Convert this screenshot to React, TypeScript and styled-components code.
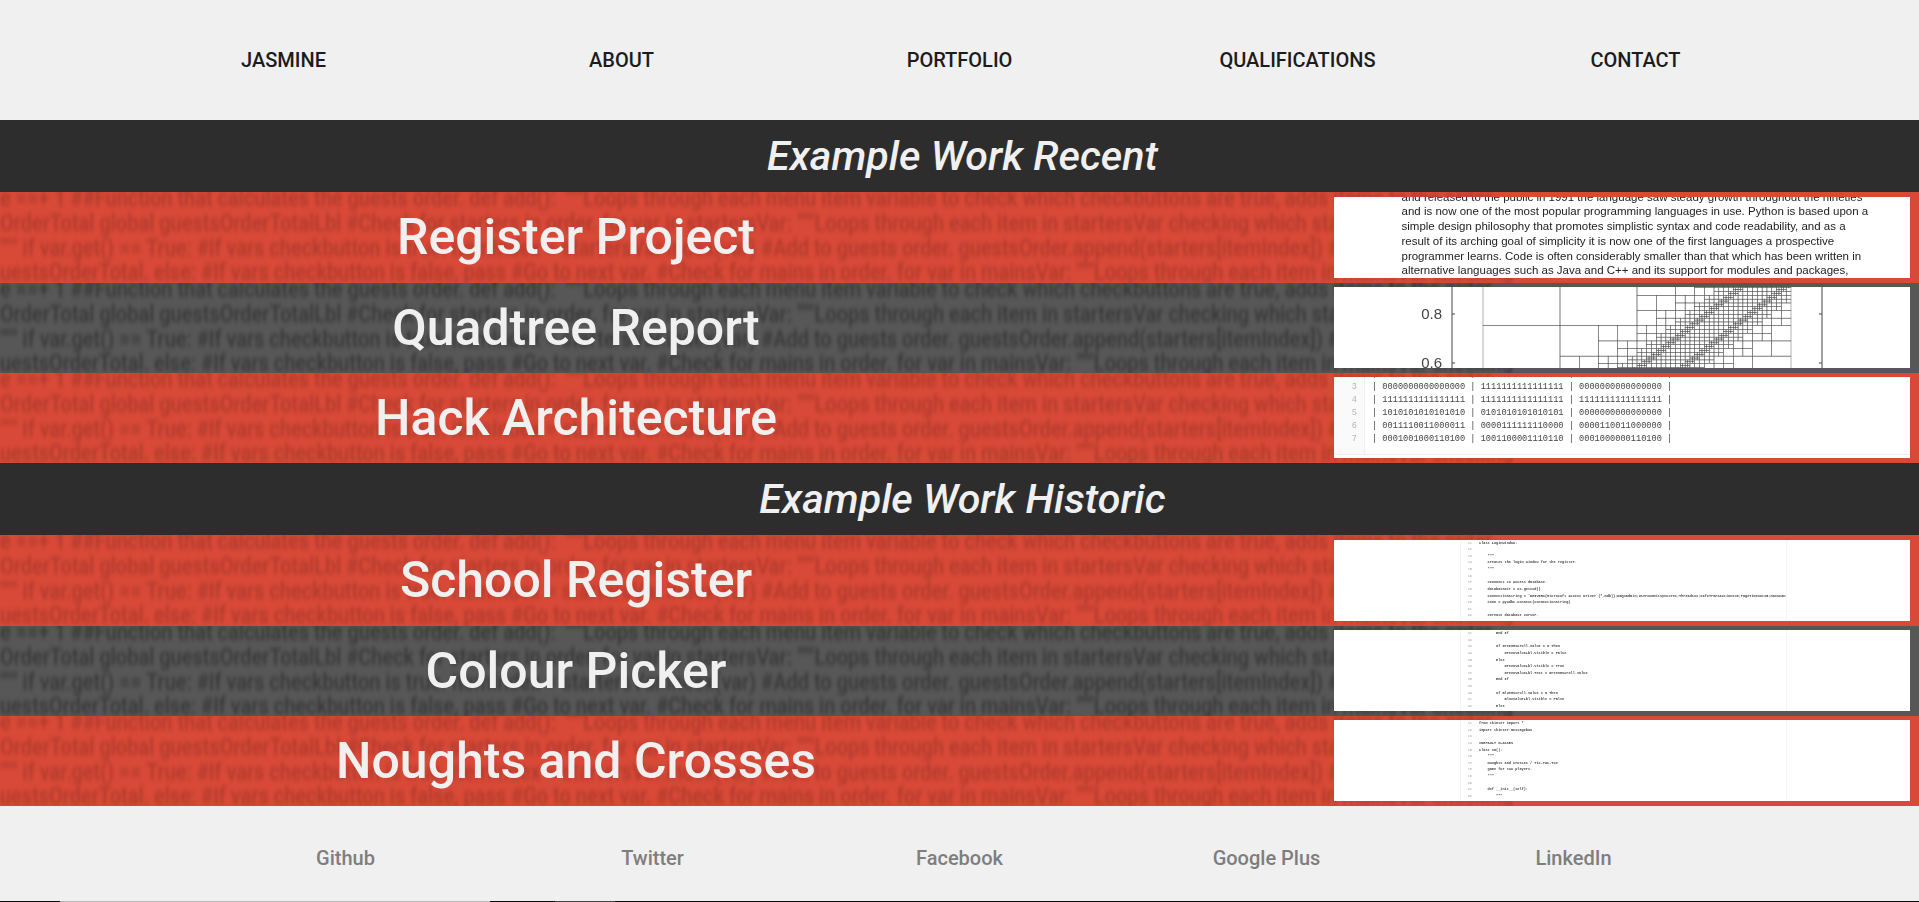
import React from 'react';
import styled, { createGlobalStyle } from 'styled-components';

const GlobalStyle = createGlobalStyle`
  html, body {
    margin: 0;
    padding: 0;
    background: #f0f0f0;
    overflow: hidden;
    font-family: Roboto, "Liberation Sans", sans-serif;
  }
`;

const Page = styled.div`
  width: 1919px;
  height: 902px;
  display: flex;
  flex-direction: column;
`;

const TopNav = styled.nav`
  height: 120px;
  width: 1690px;
  margin: 0 auto;
  display: grid;
  grid-template-columns: repeat(5, 1fr);
  align-items: center;
  text-align: center;
`;

const NavLink = styled.a`
  font-size: 20px;
  font-weight: 500;
  color: #1c1c1c;
`;

const SectionTitle = styled.h2`
  margin: 0;
  height: 72px;
  padding-left: 6px;
  line-height: 73px;
  background: #2d2d2d;
  color: #f0f0f0;
  text-align: center;
  font-size: 41.3px;
  font-weight: 500;
  font-style: italic;
`;

const RowStack = styled.section`
  height: 271px;
  display: grid;
  grid-template-rows: 91px 90px 90px;
`;

const Row = styled.article<{ $dark?: boolean }>`
  position: relative;
  overflow: hidden;
  min-height: 0;
  display: flex;
  align-items: center;
  background: ${(p) => (p.$dark ? '#575757' : '#d84937')};
`;

const BackdropText = styled.div<{ $dark?: boolean }>`
  position: absolute;
  top: -6px;
  left: 0;
  font-size: 20px;
  font-weight: 500;
  line-height: 20.85px;
  white-space: pre;
  color: ${(p) => (p.$dark ? 'rgba(0, 0, 0, 0.36)' : 'rgba(70, 20, 20, 0.27)')};
  transform: scaleY(1.18);
  transform-origin: top left;
  filter: blur(1.8px);
`;

const RowTitle = styled.h3`
  position: relative;
  margin: 0;
  width: 1152px;
  text-align: center;
  color: #f0f0f0;
  font-size: 50px;
  font-weight: 500;

  ${Row}:first-child & {
    margin-bottom: 2px;
  }
`;

const Shot = styled.div`
  position: relative;
  margin-left: auto;
  margin-right: 9px;
  margin-bottom: 1px;
  width: 576px;
  height: 81px;
  background: #fff;
  overflow: hidden;
`;

const ProseShot = styled.div`
  padding: 0 0 0 67.5px;
  margin-top: -7px;
  width: 460px;
  font-family: "Liberation Sans", Arial, sans-serif;
  font-size: 11.5px;
  line-height: 14.8px;
  color: #222;
  white-space: pre;
  filter: blur(0.4px);
`;

const TableShot = styled.div`
  display: grid;
  grid-template-columns: 31px 1fr;
  height: 77px;
  overflow: hidden;
  border-bottom: 1px solid #eee;
  filter: blur(0.45px);
`;

const Gutter = styled.div`
  background: #fafafa;
  border-right: 1px solid #f0f0f0;
  padding: 0 7px 0 0;
  text-align: right;
  font-family: "Liberation Mono", monospace;
  font-size: 8.6px;
  line-height: 13.1px;
  color: #b5b5b5;
`;

const GutterInner = styled.div`
  margin-top: -9px;
`;

const TableLines = styled.div`
  padding-left: 7px;
  margin-top: -9px;
  font-family: "Liberation Mono", monospace;
  font-size: 8.64px;
  line-height: 13.1px;
  color: #444;
  white-space: pre;
`;

const CodeShotFrame = styled.div`
  margin-left: 126px;
  width: 325px;
  height: 100%;
  display: grid;
  grid-template-columns: 15px 1fr;
  border-left: 1px solid #f5f5f5;
  border-right: 1px solid #f5f5f5;
  filter: blur(0.7px);
  font-family: "Liberation Mono", monospace;
  font-size: 3.55px;
  font-weight: 700;
  line-height: 6.62px;
  white-space: pre;
`;

const CodeNumbers = styled.div`
  padding-right: 4px;
  text-align: right;
  color: #bbb;
`;

const CodeLines = styled.div`
  padding-left: 3px;
  color: #444;
  overflow: hidden;
`;

const ChartShot = styled.svg`
  display: block;
  filter: blur(0.3px);
`;

const ChartLabel = styled.text`
  font-family: "Liberation Sans", Arial, sans-serif;
  font-size: 15px;
  fill: #444;
`;

const BottomNav = styled.footer`
  flex: 1;
  width: 1535px;
  margin: 0 auto;
  padding-top: 9px;
  display: grid;
  grid-template-columns: repeat(5, 1fr);
  align-items: center;
  text-align: center;
`;

const FooterLink = styled.a`
  font-size: 20px;
  font-weight: 500;
  color: #7e7e7e;
`;

const EdgeStrip = styled.div`
  height: 1px;
  display: flex;
  background: #0a0a0a;
`;

const EdgeSegment = styled.div<{ $from: number; $width: number; $colour: string }>`
  margin-left: ${(p) => p.$from}px;
  width: ${(p) => p.$width}px;
  background: ${(p) => p.$colour};
`;

const backdropLines = [
  'e ==+ 1 ##Function that calculates the guests order. def add():  """Loops through each menu item variable to check which checkbuttons are true, adds items to the order',
  'OrderTotal global guestsOrderTotalLbl #Check for starters in order. for var in startersVar: """Loops through each item in startersVar checking which starters are chosen.',
  '""" if var.get() == True: #If vars checkbutton is true. itemIndex = startersVar.index(var) #Add to guests order. guestsOrder.append(starters[itemIndex]) #Add price',
  'uestsOrderTotal. else: #If vars checkbutton is false, pass #Go to next var. #Check for mains in order. for var in mainsVar: """Loops through each item in mainsVar checking',
];

const Backdrop = ({ dark }: { dark?: boolean }) => (
  <BackdropText $dark={dark} aria-hidden="true">
    {backdropLines.join('\n')}
  </BackdropText>
);

const proseLines = [
  'and released to the public in 1991 the language saw steady growth throughout the nineties',
  'and is now one of the most popular programming languages in use. Python is based upon a',
  'simple design philosophy that promotes simplistic syntax and code readability, and as a',
  'result of its arching goal of simplicity it is now one of the first languages a prospective',
  'programmer learns. Code is often considerably smaller than that which has been written in',
  'alternative languages such as Java and C++ and its support for modules and packages,',
];

const tableLines = [
  '| 1111111111111111 | 1111111111111111 | 1111111111111111 |',
  '| 0000000000000000 | 1111111111111111 | 0000000000000000 |',
  '| 1111111111111111 | 1111111111111111 | 1111111111111111 |',
  '| 1010101010101010 | 0101010101010101 | 0000000000000000 |',
  '| 0011110011000011 | 0000111111110000 | 0000110011000000 |',
  '| 0001001000110100 | 1001100001110110 | 0001000000110100 |',
];

const loginCode = [
  'class LoginWindow:',
  '',
  '    """',
  '    Creates the login window for the register.',
  '    """',
  '',
  '    #Connect to Access database.',
  '    databaseDir = os.getcwd()',
  "    connectionString = 'DRIVER={Microsoft Access Driver (*.mdb)};DBQ=admin;UserCommitSync=Yes;Threads=3;SafeTransactions=0;PageTimeout=5;MaxScan=8",
  '    conn = pyodbc.connect(connectionString)',
  '',
  '    #Create database cursor.',
];

const pickerCode = [
  '        End If',
  '',
  '        If GreenHScroll.Value = 0 Then',
  '            GreenValueLbl.Visible = False',
  '        Else',
  '            GreenValueLbl.Visible = True',
  '            GreenValueLbl.Text = GreenHScroll.Value',
  '        End If',
  '',
  '        If BlueHScroll.Value = 0 Then',
  '            BlueValueLbl.Visible = False',
  '        Else',
];

const gameCode = [
  'from tkinter import *',
  'import tkinter.messagebox',
  '',
  '#DEFAULT CLASSES',
  'class XO():',
  '    """',
  '    Noughts and Crosses / Tic-Tac-Toe',
  '    game for two players.',
  '    """',
  '',
  '    def __init__(self):',
  '        """',
];

const CodeShot = ({ lines, first }: { lines: string[]; first: number }) => (
  <CodeShotFrame>
    <CodeNumbers>{lines.map((_, i) => first + i).join('\n')}</CodeNumbers>
    <CodeLines>{lines.join('\n')}</CodeLines>
  </CodeShotFrame>
);

// quadtree around two diagonal bands; the shot only shows a slice of the plot
type Cell = { x: number; y: number; size: number };

const splitWithin = [1, 1, 0.27, 0.16, 0.09, 0.055, 0.006];

const bandDistance = (cx: number, cy: number) =>
  Math.min(Math.abs(cy - cx - 0.07), Math.abs(cy - cx + 0.07)) / Math.SQRT2;

const buildCells = (x: number, y: number, size: number, depth: number, out: Cell[]) => {
  const far = bandDistance(x + size / 2, y + size / 2);
  if (depth < 7 && far < splitWithin[depth]) {
    const half = size / 2;
    buildCells(x, y, half, depth + 1, out);
    buildCells(x + half, y, half, depth + 1, out);
    buildCells(x, y + half, half, depth + 1, out);
    buildCells(x + half, y + half, half, depth + 1, out);
    return;
  }
  out.push({ x, y, size });
};

const cells: Cell[] = [];
buildCells(0, 0, 1, 0, cells);

const QuadtreePlot = () => {
  const plotLeft = 149;
  const plotWidth = 308;
  const plotBottom = 221;
  const plotHeight = 243;
  return (
    <ChartShot width="576" height="81" viewBox="0 0 576 81">
      {cells.map((c, i) => {
        const top = plotBottom - (c.y + c.size) * plotHeight;
        const h = c.size * plotHeight;
        if (top > 81 || top + h < 0) return null;
        return (
          <rect
            key={i}
            x={plotLeft + c.x * plotWidth}
            y={top}
            width={c.size * plotWidth}
            height={h}
            fill="none"
            stroke="#555"
            strokeWidth="0.45"
          />
        );
      })}
      <path d="M118 0V81M488 0V81" stroke="#444" strokeWidth="1" fill="none" />
      <path d="M118 27H121M118 76H121M485 27H488M485 76H488" stroke="#444" strokeWidth="1" fill="none" />
      <ChartLabel x="108" y="32" textAnchor="end">0.8</ChartLabel>
      <ChartLabel x="108" y="81" textAnchor="end">0.6</ChartLabel>
    </ChartShot>
  );
};

const App = () => (
  <Page>
    <GlobalStyle />
    <TopNav>
      {['JASMINE', 'ABOUT', 'PORTFOLIO', 'QUALIFICATIONS', 'CONTACT'].map((item) => (
        <NavLink key={item}>{item}</NavLink>
      ))}
    </TopNav>

    <SectionTitle>Example Work Recent</SectionTitle>
    <RowStack>
      <Row>
        <Backdrop />
        <RowTitle>Register Project</RowTitle>
        <Shot>
          <ProseShot>{proseLines.join('\n')}</ProseShot>
        </Shot>
      </Row>
      <Row $dark>
        <Backdrop dark />
        <RowTitle>Quadtree Report</RowTitle>
        <Shot>
          <QuadtreePlot />
        </Shot>
      </Row>
      <Row>
        <Backdrop />
        <RowTitle>Hack Architecture</RowTitle>
        <Shot>
          <TableShot>
            <Gutter>
              <GutterInner>
                {['2', '3', '4', '5', '6', '7'].map((n) => <div key={n}>{n}</div>)}
              </GutterInner>
            </Gutter>
            <TableLines>{tableLines.join('\n')}</TableLines>
          </TableShot>
        </Shot>
      </Row>
    </RowStack>

    <SectionTitle>Example Work Historic</SectionTitle>
    <RowStack>
      <Row>
        <Backdrop />
        <RowTitle>School Register</RowTitle>
        <Shot>
          <CodeShot lines={loginCode} first={11} />
        </Shot>
      </Row>
      <Row $dark>
        <Backdrop dark />
        <RowTitle>Colour Picker</RowTitle>
        <Shot>
          <CodeShot lines={pickerCode} first={31} />
        </Shot>
      </Row>
      <Row>
        <Backdrop />
        <RowTitle>Noughts and Crosses</RowTitle>
        <Shot>
          <CodeShot lines={gameCode} first={11} />
        </Shot>
      </Row>
    </RowStack>

    <BottomNav>
      {['Github', 'Twitter', 'Facebook', 'Google Plus', 'LinkedIn'].map((item) => (
        <FooterLink key={item}>{item}</FooterLink>
      ))}
    </BottomNav>
    <EdgeStrip>
      <EdgeSegment $from={60} $width={430} $colour="#b5b5b5" />
      <EdgeSegment $from={65} $width={60} $colour="#444444" />
    </EdgeStrip>
  </Page>
);

export default App;
